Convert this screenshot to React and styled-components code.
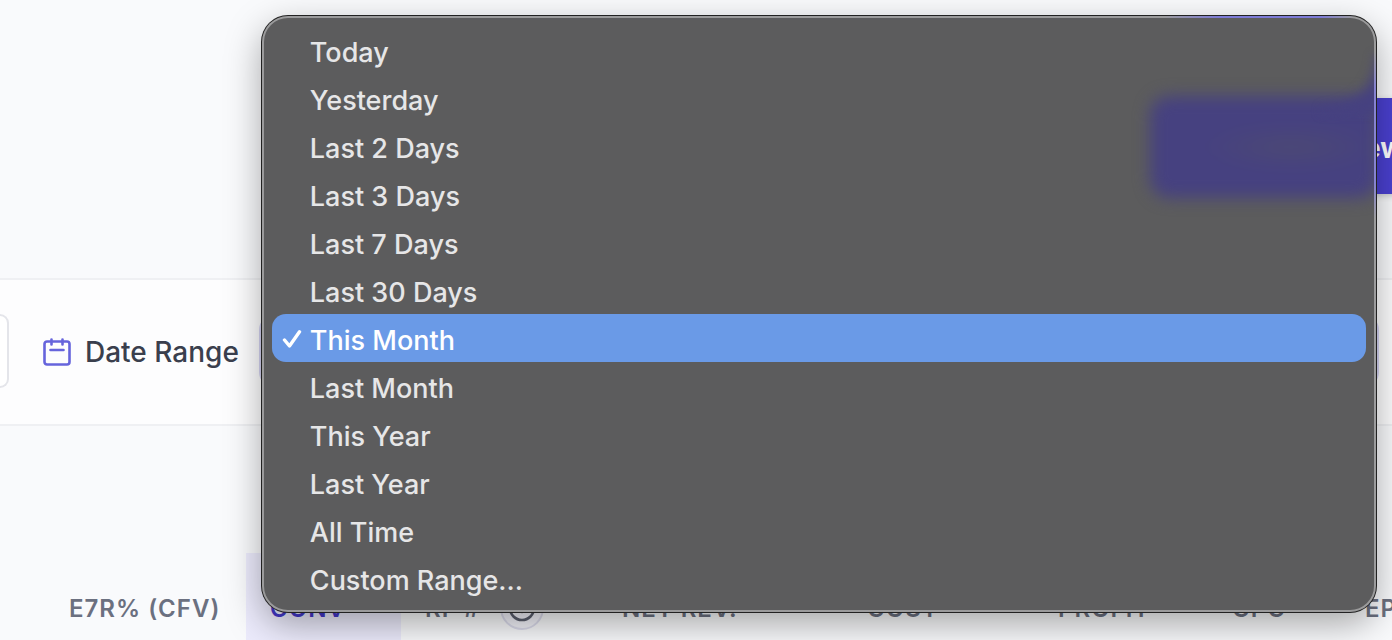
import React, { useState } from "react";
import styled, { createGlobalStyle } from "styled-components";

const ranges = [
  "Today",
  "Yesterday",
  "Last 2 Days",
  "Last 3 Days",
  "Last 7 Days",
  "Last 30 Days",
  "This Month",
  "Last Month",
  "This Year",
  "Last Year",
  "All Time",
  "Custom Range...",
];

const columns = [
  { label: "E7R% (CFV)", width: 201 },
  { label: "CONV", width: 155, active: true },
  { label: "RF #", width: 197, info: true },
  { label: "NET REV.", width: 245 },
  { label: "COST", width: 191 },
  { label: "PROFIT", width: 174 },
  { label: "CPC", width: 133 },
  { label: "EPC", width: 160 },
];

const CalendarIcon = () => (
  <svg width="28" height="28" viewBox="0 0 28 28" fill="none" stroke="#6664dc" strokeWidth="2.6" strokeLinecap="round" aria-hidden="true">
    <rect x="1.500" y="3.500" width="25" height="23" rx="2.500" />
    <path d="M8.500 1.500v5M19.500 1.500v5M7.500 12h13" />
  </svg>
);

const CheckIcon = () => (
  <svg width="20" height="20" viewBox="0 0 20 20" fill="none" stroke="#fff" strokeWidth="3.4" strokeLinecap="round" strokeLinejoin="round" aria-hidden="true">
    <path d="M2.500 10L7.500 16L17.500 1.800" />
  </svg>
);

const InfoIcon = () => (
  <svg width="28" height="28" viewBox="0 0 28 28" fill="none" stroke="#5b5f6e" strokeWidth="2.6" strokeLinecap="round" aria-hidden="true">
    <circle cx="14" cy="14" r="12" />
    <path d="M14 13v5M14 8.500v.1" />
  </svg>
);

const App = () => {
  const [range, setRange] = useState("This Month");

  return (
    <Page>
      <GlobalStyle />
      <Header>
        <CreateButton type="button">Create New</CreateButton>
      </Header>

      <FilterBar>
        <SearchInput type="text" aria-label="Search" />
        <RangeLabel htmlFor="range">
          <CalendarIcon />
          Date Range
        </RangeLabel>
        <RangeField>
          <RangeSelect id="range" value={range} onChange={(e) => setRange(e.target.value)}>
            {ranges.map((name) => (
              <option key={name}>{name}</option>
            ))}
          </RangeSelect>
          <Menu>
            <MenuPanel role="listbox" aria-label="Date Range">
              <Glow />
              <CornerGlow />
              {ranges.map((name) => (
                <MenuItem
                  key={name}
                  type="button"
                  role="option"
                  aria-selected={name === range}
                  $selected={name === range}
                  onClick={() => setRange(name)}
                >
                  <CheckSlot>{name === range && <CheckIcon />}</CheckSlot>
                  {name}
                </MenuItem>
              ))}
            </MenuPanel>
          </Menu>
        </RangeField>
      </FilterBar>

      <TableArea>
        <Table>
          <thead>
            <tr>
              {columns.map((col) => (
                <HeadCell key={col.label} $width={col.width} $active={col.active}>
                  <HeadContent>
                    {col.label}
                    {col.info && (
                      <InfoButton type="button" aria-label="About RF #">
                        <InfoIcon />
                      </InfoButton>
                    )}
                  </HeadContent>
                </HeadCell>
              ))}
            </tr>
          </thead>
        </Table>
      </TableArea>
    </Page>
  );
};

export default App;

const GlobalStyle = createGlobalStyle`
  * {
    box-sizing: border-box;
  }

  body {
    margin: 0;
    background: #f9fafc;
    font-family: Inter, "Liberation Sans", sans-serif;
  }

  button, input, select {
    font-family: inherit;
  }
`;

const Page = styled.div`
  height: 100vh;
  overflow: hidden;
`;

const Header = styled.header`
  display: flex;
  justify-content: flex-end;
  padding: 98px 0 84px;
`;

const CreateButton = styled.button`
  flex: none;
  width: 310px;
  height: 96px;
  margin-right: -68px;
  padding: 4px 56px 0 0;
  border: none;
  border-radius: 16px;
  background: #4a40d0;
  color: #fff;
  font-size: 28px;
  font-weight: 700;
  text-align: right;
  white-space: nowrap;
  box-shadow: 0 2px 6px rgba(0, 0, 0, 0.2);
`;

const FilterBar = styled.section`
  display: flex;
  align-items: center;
  padding: 34px 13px 36px 0;
  border-top: 2px solid #eff0f3;
  border-bottom: 2px solid #eff0f3;
  background: #fdfdfe;
`;

const SearchInput = styled.input`
  width: 9px;
  height: 74px;
  padding: 0;
  border: 2px solid #e4e5ea;
  border-left: none;
  border-radius: 0 16px 16px 0;
  background: #fff;
`;

const RangeLabel = styled.label`
  display: flex;
  align-items: center;
  gap: 14px;
  margin: 0 20px 0 34px;
  padding-top: 2px;
  color: #3a3f4d;
  font-size: 28px;
  font-weight: 500;
  line-height: 36px;
  white-space: nowrap;
`;

const RangeField = styled.div`
  position: relative;
  flex: 1;
  display: flex;
`;

const RangeSelect = styled.select`
  width: 100%;
  height: 74px;
  padding: 0 32px;
  border: 2px solid #d5d4f2;
  border-radius: 16px;
  background: #e6e6fa;
  color: #3a3f4d;
  font-size: 28px;
  appearance: none;
`;

const Menu = styled.div`
  position: absolute;
  top: -298px;
  left: 3px;
  right: 3px;
  z-index: 2;
  padding: 2px;
  border-radius: 26px;
  background:
    linear-gradient(180deg, transparent 6%, #8582d0 12%, #8582d0 28%, transparent 34%) right / 3px 100% no-repeat,
    linear-gradient(90deg, transparent 81%, #7c7ad6 86%, #7c7ad6 95%, transparent 98%) top / 100% 3px no-repeat,
    #9b9b9c;
  box-shadow: 0 0 0 1px #222, 0 12px 36px rgba(0, 0, 0, 0.34);
`;

const MenuPanel = styled.div`
  position: relative;
  overflow: hidden;
  display: flex;
  flex-direction: column;
  padding: 8px;
  border-radius: 24px;
  background: #5c5c5d;
`;

/* the header button showing through the menu */
const Glow = styled.span`
  position: absolute;
  top: 78px;
  right: -4px;
  width: 228px;
  height: 102px;
  border-radius: 20px;
  background: radial-gradient(ellipse 90px 22px at 62% 50%, #4c4974, #464180);
  filter: blur(8px);
`;

const CornerGlow = styled.span`
  position: absolute;
  top: 36px;
  right: -6px;
  width: 60px;
  height: 60px;
  background: radial-gradient(circle at 0 0, transparent 50px, #464180 64px);
  filter: blur(4px);
`;

const MenuItem = styled.button`
  position: relative;
  display: flex;
  align-items: center;
  height: 48px;
  padding: 4px 10px 0;
  border: none;
  border-radius: 14px;
  background: ${(props) => (props.$selected ? "#6a9ae7" : "transparent")};
  color: ${(props) => (props.$selected ? "#fff" : "#e6e6e7")};
  font-size: 27px;
  font-weight: 500;
  text-align: left;
`;

const CheckSlot = styled.span`
  display: flex;
  width: 28px;
`;

const TableArea = styled.main`
  padding: 127px 0 0 45px;
`;

const Table = styled.table`
  width: max-content;
  border-collapse: collapse;
  table-layout: fixed;
`;

const HeadCell = styled.th`
  width: ${(props) => props.$width}px;
  min-width: ${(props) => props.$width}px;
  height: 110px;
  padding: 0 0 0 24px;
  background: ${(props) => (props.$active ? "#ecebfc" : "transparent")};
  color: ${(props) => (props.$active ? "#4338ca" : "#6b7080")};
  font-size: 24px;
  font-weight: 600;
  letter-spacing: 1px;
  text-align: left;
  white-space: nowrap;
`;

const HeadContent = styled.div`
  display: flex;
  align-items: center;
  gap: 20px;
`;

const InfoButton = styled.button`
  display: flex;
  align-items: center;
  justify-content: center;
  width: 44px;
  height: 44px;
  padding: 0;
  border: 2px solid #dcdcec;
  border-radius: 50%;
  background: #f3f3fa;
`;
